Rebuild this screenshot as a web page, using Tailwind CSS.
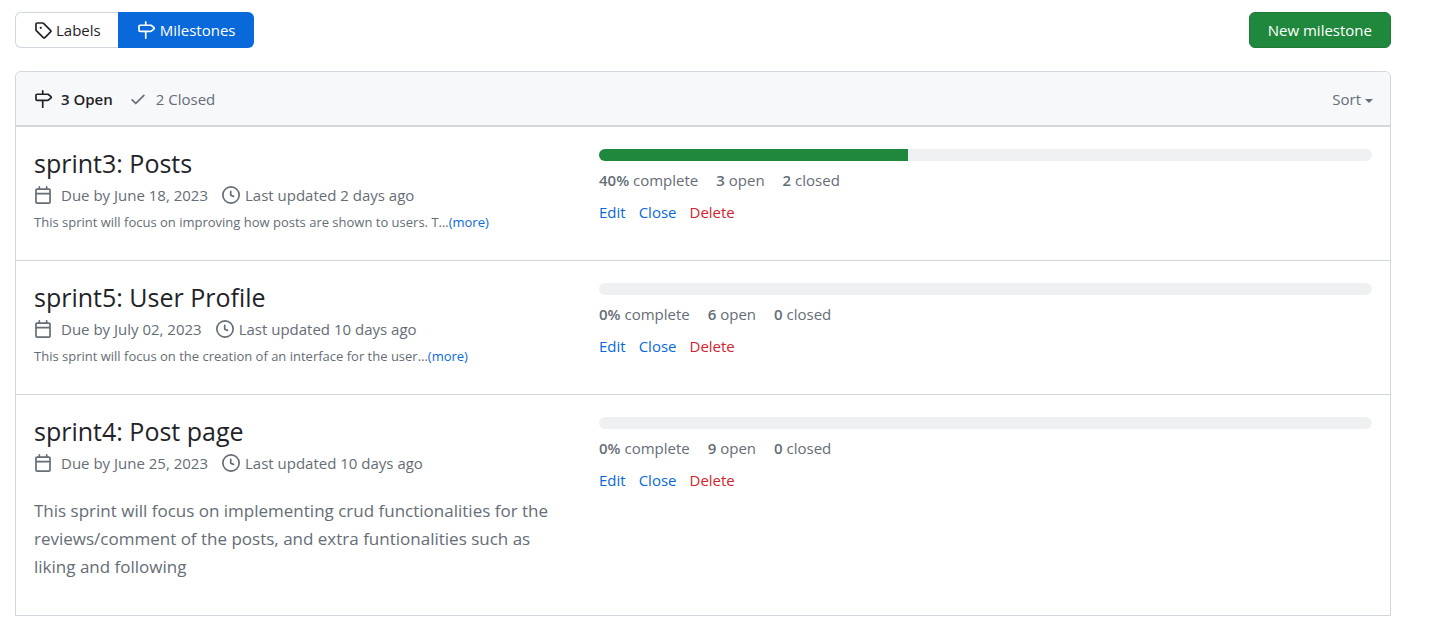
<!DOCTYPE html>
<html lang="en">
<head>
<meta charset="utf-8">
<meta name="viewport" content="width=device-width, initial-scale=1">
<title>Milestones</title>
<script src="https://cdn.jsdelivr.net/npm/@tailwindcss/browser@4"></script>
</head>
<body class="bg-white font-['Open_Sans','Noto_Sans',sans-serif] text-[15px] leading-6 text-[#656d76]">
<svg class="hidden" aria-hidden="true">
  <symbol id="tag" viewBox="0 0 16 16"><path d="M1 7.775V2.75C1 1.784 1.784 1 2.75 1h5.025c.464 0 .91.184 1.238.513l6.25 6.25a1.75 1.75 0 0 1 0 2.474l-5.026 5.026a1.75 1.75 0 0 1-2.474 0l-6.25-6.25A1.752 1.752 0 0 1 1 7.775Zm1.5 0c0 .066.026.13.073.177l6.25 6.25a.25.25 0 0 0 .354 0l5.025-5.025a.25.25 0 0 0 0-.354l-6.25-6.25a.25.25 0 0 0-.177-.073H2.75a.25.25 0 0 0-.25.25ZM6 5a1 1 0 1 1 0 2 1 1 0 0 1 0-2Z"/></symbol>
  <symbol id="milestone" viewBox="0 0 16 16"><path d="M7.75 0a.75.75 0 0 1 .75.75V3h3.634c.414 0 .814.147 1.13.414l2.07 1.75a1.75 1.75 0 0 1 0 2.672l-2.07 1.75a1.75 1.75 0 0 1-1.13.414H8.5v5.25a.75.75 0 0 1-1.5 0V10H2.75A1.75 1.75 0 0 1 1 8.25v-3.5C1 3.784 1.784 3 2.75 3H7V.75A.75.75 0 0 1 7.75 0Zm4.384 8.5a.25.25 0 0 0 .161-.06l2.07-1.75a.248.248 0 0 0 0-.38l-2.07-1.75a.25.25 0 0 0-.161-.06H2.75a.25.25 0 0 0-.25.25v3.5c0 .138.112.25.25.25h9.384Z"/></symbol>
  <symbol id="check" viewBox="0 0 16 16"><path d="M13.78 4.22a.75.75 0 0 1 0 1.06l-7.25 7.25a.75.75 0 0 1-1.06 0L2.22 9.28a.751.751 0 0 1 .018-1.042.751.751 0 0 1 1.042-.018L6 10.94l6.72-6.72a.75.75 0 0 1 1.06 0Z"/></symbol>
  <symbol id="calendar" viewBox="0 0 16 16"><path d="M4.75 0a.75.75 0 0 1 .75.75V2h5V.75a.75.75 0 0 1 1.5 0V2h1.25c.966 0 1.75.784 1.75 1.75v10.5A1.75 1.75 0 0 1 13.25 16H2.75A1.75 1.75 0 0 1 1 14.25V3.75C1 2.784 1.784 2 2.75 2H4V.75A.75.75 0 0 1 4.75 0ZM2.5 7.5v6.75c0 .138.112.25.25.25h10.5a.25.25 0 0 0 .25-.25V7.5Zm10.75-4H2.75a.25.25 0 0 0-.25.25V6h11V3.75a.25.25 0 0 0-.25-.25Z"/></symbol>
  <symbol id="clock" viewBox="0 0 16 16"><path d="M8 0a8 8 0 1 1 0 16A8 8 0 0 1 8 0ZM1.5 8a6.5 6.5 0 1 0 13 0 6.5 6.5 0 0 0-13 0Zm7-3.25v2.992l2.028.812a.75.75 0 0 1-.557 1.392l-2.5-1A.751.751 0 0 1 7 8.25v-3.5a.75.75 0 0 1 1.5 0Z"/></symbol>
</svg>

<main class="pt-3 pr-[41px] pb-5 pl-[15px]">
  <div class="flex flex-wrap items-center justify-between gap-3">
    <nav class="flex h-9" aria-label="Labels and milestones">
      <a href="#labels" class="flex items-center gap-1 rounded-l-md border border-r-0 border-[#d0d7de] pr-[17px] pl-[18px] text-[#1f2328]"><svg class="size-[18px] fill-current"><use href="#tag"/></svg>Labels</a>
      <a href="#milestones" aria-current="page" class="flex items-center gap-[5px] rounded-r-md bg-[#0969da] px-[19px] text-white"><svg class="size-[18px] fill-current"><use href="#milestone"/></svg>Milestones</a>
    </nav>
    <button type="button" class="h-9 rounded-md border border-[#1f7a38] bg-[#1f883d] px-[18px] text-white">New milestone</button>
  </div>

  <section class="mt-[23px] rounded-t-md border border-[#d0d7de]">
    <header class="flex items-center justify-between rounded-t-md border-b-2 border-[#d0d7de] bg-[#f6f8fa] pr-[17px] pl-[18px] pt-[15px] pb-[14px]">
      <div class="flex items-center gap-4">
        <a href="#open" class="flex items-center gap-[9px] font-semibold text-[#1f2328]"><svg class="size-[18px] fill-current"><use href="#milestone"/></svg>3 Open</a>
        <a href="#closed" class="flex items-center gap-[9px]"><svg class="size-[18px] fill-current"><use href="#check"/></svg>2 Closed</a>
      </div>
      <button type="button" class="flex items-center gap-1">Sort<span class="mt-1 border-x-4 border-t-4 border-x-transparent border-t-current"></span></button>
    </header>

    <ul class="divide-y divide-[#d0d7de]">
      <li class="grid gap-x-[30px] gap-y-4 px-[18px] pt-[18px] pb-[27px] lg:grid-cols-[535px_1fr]">
        <div>
          <h2 class="text-[25px] leading-9"><a href="#sprint3" class="text-[#1f2328]">sprint3: Posts</a></h2>
          <div class="flex flex-wrap items-center gap-x-[14px] pt-0.5">
            <span class="flex items-center gap-[9px]"><svg class="size-[18px] fill-current"><use href="#calendar"/></svg>Due by June 18, 2023</span>
            <span class="flex items-center gap-[5px]"><svg class="size-[18px] fill-current"><use href="#clock"/></svg>Last updated 2 days ago</span>
          </div>
          <p class="pt-1 text-[13px] leading-[22px]">This sprint will focus on improving how posts are shown to users. T…<button type="button" class="text-[#0969da]">(more)</button></p>
        </div>
        <div class="pt-1">
          <div class="h-3 overflow-hidden rounded-md bg-[#eff0f2]" role="progressbar" aria-label="sprint3: Posts" aria-valuenow="40"><div class="h-full bg-[#1f883d]" style="width:40%"></div></div>
          <div class="flex gap-[18px] pt-[7px]"><span><b class="font-semibold">40%</b> complete</span><span><b class="font-semibold">3</b> open</span><span><b class="font-semibold">2</b> closed</span></div>
          <div class="flex gap-[13px] pt-2 text-[#0969da]"><a href="#edit3">Edit</a><button type="button">Close</button><button type="button" class="text-[#d1242f]">Delete</button></div>
        </div>
      </li>
      <li class="grid gap-x-[30px] gap-y-4 px-[18px] pt-[18px] pb-[27px] lg:grid-cols-[535px_1fr]">
        <div>
          <h2 class="text-[25px] leading-9"><a href="#sprint5" class="text-[#1f2328]">sprint5: User Profile</a></h2>
          <div class="flex flex-wrap items-center gap-x-[14px] pt-0.5">
            <span class="flex items-center gap-[9px]"><svg class="size-[18px] fill-current"><use href="#calendar"/></svg>Due by July 02, 2023</span>
            <span class="flex items-center gap-[5px]"><svg class="size-[18px] fill-current"><use href="#clock"/></svg>Last updated 10 days ago</span>
          </div>
          <p class="pt-1 text-[13px] leading-[22px]">This sprint will focus on the creation of an interface for the user…<button type="button" class="text-[#0969da]">(more)</button></p>
        </div>
        <div class="pt-1">
          <div class="h-3 overflow-hidden rounded-md bg-[#eff0f2]" role="progressbar" aria-label="sprint5: User Profile" aria-valuenow="0"></div>
          <div class="flex gap-[18px] pt-[7px]"><span><b class="font-semibold">0%</b> complete</span><span><b class="font-semibold">6</b> open</span><span><b class="font-semibold">0</b> closed</span></div>
          <div class="flex gap-[13px] pt-2 text-[#0969da]"><a href="#edit5">Edit</a><button type="button">Close</button><button type="button" class="text-[#d1242f]">Delete</button></div>
        </div>
      </li>
      <li class="grid gap-x-[30px] gap-y-4 px-[18px] pt-[18px] pb-[34px] lg:grid-cols-[535px_1fr]">
        <div>
          <h2 class="text-[25px] leading-9"><a href="#sprint4" class="text-[#1f2328]">sprint4: Post page</a></h2>
          <div class="flex flex-wrap items-center gap-x-[14px] pt-0.5">
            <span class="flex items-center gap-[9px]"><svg class="size-[18px] fill-current"><use href="#calendar"/></svg>Due by June 25, 2023</span>
            <span class="flex items-center gap-[5px]"><svg class="size-[18px] fill-current"><use href="#clock"/></svg>Last updated 10 days ago</span>
          </div>
          <p class="pt-[22px] text-[17px] leading-7">This sprint will focus on implementing crud functionalities for the reviews/comment of the posts, and extra funtionalities such as liking and following</p>
        </div>
        <div class="pt-1">
          <div class="h-3 overflow-hidden rounded-md bg-[#eff0f2]" role="progressbar" aria-label="sprint4: Post page" aria-valuenow="0"></div>
          <div class="flex gap-[18px] pt-[7px]"><span><b class="font-semibold">0%</b> complete</span><span><b class="font-semibold">9</b> open</span><span><b class="font-semibold">0</b> closed</span></div>
          <div class="flex gap-[13px] pt-2 text-[#0969da]"><a href="#edit4">Edit</a><button type="button">Close</button><button type="button" class="text-[#d1242f]">Delete</button></div>
        </div>
      </li>
    </ul>
  </section>
</main>
</body>
</html>
